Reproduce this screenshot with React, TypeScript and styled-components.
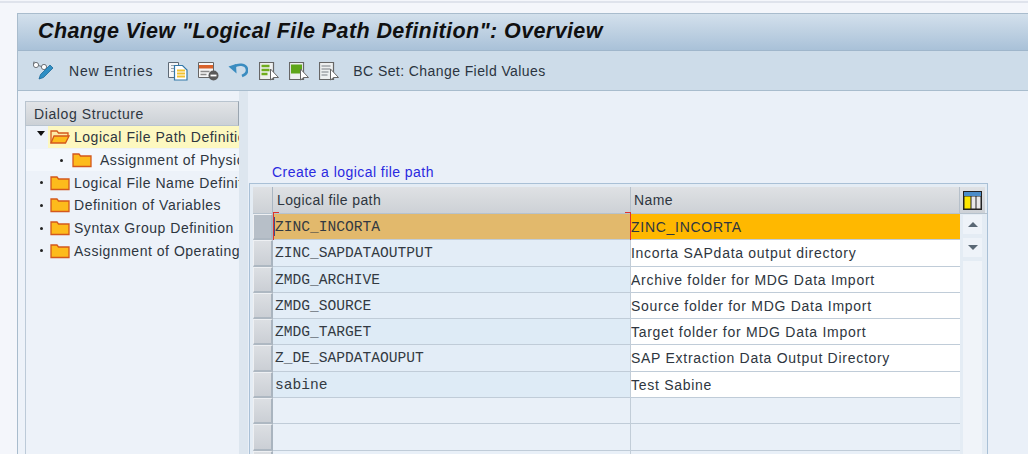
import React from 'react';
import styled, { createGlobalStyle } from 'styled-components';

const GlobalStyle = createGlobalStyle`
    html, body {
        margin: 0;
        padding: 0;
        width: 1028px;
        height: 454px;
        overflow: hidden;
        background: #f4f6fb;
    }
`;

const Page = styled.div`
    width: 1028px;
    height: 454px;
    box-sizing: border-box;
    padding: 1px 0 0 0;
    overflow: hidden;
    font-family: 'Liberation Sans', Arial, sans-serif;
`;

const TopLine = styled.div`
    height: 12px;
    border-top: 2px solid #dfe3ec;
    box-sizing: border-box;
`;

const Frame = styled.div`
    margin-left: 17px;
    height: 441px;
    border-left: 1px solid #a9bccd;
    border-top: 1px solid #a9bccd;
    display: flex;
    flex-direction: column;
`;

const TitleBar = styled.div`
    height: 37px;
    flex: none;
    box-sizing: border-box;
    padding: 2px 0 0 20px;
    background: linear-gradient(#d3e0ec, #a9c1d8);
    border-bottom: 1px solid #9fb6cb;
`;

const Title = styled.h1`
    margin: 0;
    font: italic bold 21.5px/30px 'Liberation Sans', Arial, sans-serif;
    letter-spacing: 0.4px;
    color: #101010;
    white-space: nowrap;
`;

const Toolbar = styled.div`
    height: 40px;
    flex: none;
    box-sizing: border-box;
    display: flex;
    align-items: center;
    padding-left: 14px;
    background: #cddce9;
    border-bottom: 1px solid #a8bccd;
`;

const ToolText = styled.span<{ $gap?: number; $spacing: number }>`
    margin-right: ${(p) => p.$gap ?? 0}px;
    font-size: 14px;
    letter-spacing: ${(p) => p.$spacing}px;
    color: #2b3440;
    white-space: nowrap;
`;

const ToolIcon = styled.svg<{ $gap?: number }>`
    flex: none;
    margin-right: ${(p) => p.$gap ?? 10}px;
`;

const Body = styled.div`
    flex: 1;
    min-height: 0;
    display: flex;
    background: #e8eff7;
`;

const TreePanel = styled.div`
    width: 221px;
    flex: none;
    box-sizing: border-box;
    padding: 10px 0 0 7px;
    background: #edf2f9;
`;

const TreeHeader = styled.div`
    height: 25px;
    box-sizing: border-box;
    padding-left: 8px;
    font-size: 14px;
    letter-spacing: 0.6px;
    line-height: 24px;
    color: #2e3640;
    background: linear-gradient(#e2e4e7, #ccd1d6);
    border: 1px solid #b9c4cf;
    border-right-color: #9aa5b0;
`;

const TreeList = styled.div`
    border-left: 1px solid #bccad8;
    height: 330px;
    overflow: hidden;
`;

const TreeRow = styled.div<{ $indent: number; $soft?: boolean }>`
    height: 22.7px;
    display: flex;
    align-items: center;
    padding-left: ${(p) => p.$indent}px;
    background: ${(p) => (p.$soft ? '#f3f7fc' : 'transparent')};
    white-space: nowrap;
    overflow: hidden;
`;

const Marker = styled.span`
    width: 12px;
    flex: none;
    display: flex;
    justify-content: center;
`;

const Dot = styled.span`
    width: 3px;
    height: 3px;
    border-radius: 50%;
    background: #222;
`;

const Arrow = styled.span`
    margin-top: -6px;
    width: 0;
    height: 0;
    border-left: 4px solid transparent;
    border-right: 4px solid transparent;
    border-top: 5px solid #111;
`;

const NodeLabel = styled.span<{ $gap: number }>`
    margin-left: ${(p) => p.$gap}px;
    font-size: 14px;
    letter-spacing: 0.52px;
    line-height: 22px;
    color: #2e3640;
    flex: 1;
`;

const FolderSlot = styled.span<{ $gap: number }>`
    margin-left: ${(p) => p.$gap}px;
    display: flex;
    flex: none;
`;

const ActiveWrap = styled.span`
    display: flex;
    align-items: center;
    flex: 1;
    height: 22px;
    margin-left: 1px;
    padding-left: 2px;
    background: #fdf8c0;
`;

const Splitter = styled.div`
    width: 9px;
    flex: none;
    background: #dde6ef;
`;

const Content = styled.div`
    flex: 1;
    min-width: 0;
    box-sizing: border-box;
    padding: 70px 0 0 1px;
    background: #eaf0f8;
`;

const Caption = styled.div`
    margin-left: 23px;
    height: 22px;
    font-size: 14px;
    letter-spacing: 0.45px;
    line-height: 23px;
    color: #2a2ae0;
`;

const TableWrap = styled.div`
    width: 739px;
    height: 300px;
    box-sizing: border-box;
    padding: 3px 0 0 3px;
    background: #e4ecf4;
    border: 1px solid #a9c0d6;
    border-bottom: none;
`;

const HeaderRow = styled.div`
    display: flex;
    height: 26px;
    border-bottom: 1px solid #b6c2cd;
`;

const Corner = styled.div`
    width: 20px;
    flex: none;
    background: linear-gradient(#dfe1e4, #cdd1d6);
    border-right: 1px solid #aab6c2;
    box-sizing: border-box;
`;

const HeaderCell = styled.div<{ $w: number; $pad: number }>`
    width: ${(p) => p.$w}px;
    flex: none;
    box-sizing: border-box;
    padding-left: ${(p) => p.$pad}px;
    font-size: 14px;
    letter-spacing: 0.4px;
    line-height: 26px;
    color: #2e3640;
    background: linear-gradient(#dfe1e4, #cdd1d6);
    border-right: 1px solid #b6c0ca;
`;

const ConfigCell = styled.div`
    width: 25px;
    flex: none;
    display: flex;
    justify-content: center;
    align-items: center;
    background: linear-gradient(#dfe1e4, #cdd1d6);
`;

const BodyArea = styled.div`
    display: flex;
`;

const Rows = styled.div`
    width: 707px;
    flex: none;
`;

const Row = styled.div`
    display: flex;
    height: 26.3px;
    box-sizing: border-box;
`;

const Selector = styled.div<{ $selected?: boolean }>`
    width: 20px;
    flex: none;
    box-sizing: border-box;
    border: 1px solid #eef0f3;
    border-right: 2px solid #a9b4bf;
    border-bottom: 2px solid #aeb8c2;
    background: ${(p) => (p.$selected ? '#b7bfc8' : 'linear-gradient(#dcdfe3, #cbcfd5)')};
`;

const KeyCell = styled.div<{ $selected?: boolean; $filled: boolean; $alt: boolean }>`
    width: 358px;
    flex: none;
    box-sizing: border-box;
    position: relative;
    padding: 1px 0 0 2px;
    font: 14.6px/24px 'Liberation Mono', 'Courier New', monospace;
    color: #333a42;
    background: ${(p) =>
        p.$selected ? '#e2b96c' : p.$filled ? (p.$alt ? '#deebf6' : '#e3edf7') : '#e9f0f8'};
    border-right: 1px solid #c2cdd8;
    border-bottom: 1px solid #c0ccd8;
`;

const FocusMark = styled.span<{ $side: 'left' | 'right' }>`
    position: absolute;
    ${(p) => p.$side}: ${(p) => (p.$side === 'left' ? '0' : '-1px')};
    top: -2px;
    width: 6px;
    height: 29px;
    box-sizing: border-box;
    border-top: 1px solid #e0322c;
    border-bottom: 1px solid #e0322c;
    border-${(p) => p.$side}: 1px solid #e0322c;
`;

const Cursor = styled.span`
    position: absolute;
    left: 1px;
    top: 3px;
    width: 1px;
    height: 19px;
    background: #3a4f8c;
`;

const NameCell = styled.div<{ $selected?: boolean; $filled: boolean }>`
    width: 329px;
    flex: none;
    box-sizing: border-box;
    padding: 1px 0 0 0;
    font-size: 14px;
    letter-spacing: 0.72px;
    line-height: 24px;
    white-space: nowrap;
    color: #2e3640;
    background: ${(p) => (p.$selected ? '#ffb800' : p.$filled ? '#ffffff' : '#e9f0f8')};
    border-bottom: 1px solid #c0ccd8;
`;

const Scrollbar = styled.div`
    width: 25px;
    flex: none;
    display: flex;
    flex-direction: column;
    align-items: center;
    padding-top: 1px;
    gap: 4px;
`;

const ScrollButton = styled.div`
    width: 19px;
    height: 19px;
    display: flex;
    align-items: center;
    justify-content: center;
    background: #eef3f9;
`;

const ArrowUp = styled.span`
    width: 0;
    height: 0;
    border-left: 5px solid transparent;
    border-right: 5px solid transparent;
    border-bottom: 5px solid #5a6875;
`;

const ArrowDown = styled.span`
    width: 0;
    height: 0;
    border-left: 5px solid transparent;
    border-right: 5px solid transparent;
    border-top: 5px solid #5a6875;
`;

const ScrollTrack = styled.div`
    width: 19px;
    height: 200px;
    background: #f0f4f9;
`;

const GlassesPenIcon = () => (
    <ToolIcon $gap={13} width="24" height="22" viewBox="0 0 24 22">
        <circle cx="4" cy="5" r="2.600" fill="#fff" stroke="#6c7278" />
        <circle cx="12" cy="7" r="2.600" fill="#fff" stroke="#6c7278" />
        <path d="M6.500 5.500 9.500 6.500M1.500 4 2 1.500" stroke="#6c7278" fill="none" />
        <path d="M7 19l1.500-4.500L18 5l3 3-9.500 9.500z" fill="#2f8fc4" stroke="#1d6a99" strokeWidth="0.8" />
    </ToolIcon>
);

const CopyIcon = () => (
    <ToolIcon width="20" height="20" viewBox="0 0 20 20">
        <path d="M0.500 1.500h10v15h-10z" fill="#f4f6f8" stroke="#5e6a76" />
        <path d="M3 4.500h5M3 7.500h3M3 10.500h3" stroke="#9aa4ae" />
        <path d="M6.500 4.500h8l4.500 4.500v10h-12.500z" fill="#fff" stroke="#3278a8" strokeWidth="1.200" />
        <path d="M9 9.500h8M9 12.500h8M9 15.500h8" stroke="#f2c230" strokeWidth="1.800" />
    </ToolIcon>
);

const DeleteIcon = () => (
    <ToolIcon $gap={9} width="21" height="20" viewBox="0 0 21 20">
        <path d="M0.500 1.500h15v15h-15z" fill="#f6f6f6" stroke="#666" />
        <path d="M1 4h14v3.500H1z" fill="#d9622b" />
        <path d="M2.500 10.500h9M2.500 13.500h6" stroke="#8a8a8a" strokeWidth="1.300" />
        <circle cx="15.500" cy="14.500" r="5" fill="#5a5a5a" />
        <path d="M12.500 14.500h6" stroke="#fff" strokeWidth="1.800" />
    </ToolIcon>
);

const UndoIcon = () => (
    <ToolIcon $gap={11} width="20" height="20" viewBox="0 0 20 20">
        <path
            d="M6 5.500c4-2.500 12-3 13 3c.5 3.500-2.500 5.500-5 6.500"
            fill="none"
            stroke="#3a8cc0"
            strokeWidth="2.600"
        />
        <path d="M0.500 5.500l7.500-2.500 .500 9.500z" fill="#3a8cc0" />
    </ToolIcon>
);

const SelectIcon = ({ kind, gap }: { kind: 'lines' | 'block' | 'plain'; gap?: number }) => (
    <ToolIcon $gap={gap} width="20" height="20" viewBox="0 0 20 20">
        <path d="M0.500 1.500h14v17h-14z" fill="#eef0f0" stroke="#666" strokeWidth="1.200" />
        {kind === 'lines' && <path d="M2.500 5h8M2.500 9h8M2.500 13h6" stroke="#6fac1e" strokeWidth="2.600" />}
        {kind === 'block' && <path d="M2 3.500h11v9H2z" fill="#5ea518" />}
        {kind === 'plain' && <path d="M2.500 5h9M2.500 8h9M2.500 11h7M2.500 14h6" stroke="#a0a4a8" strokeWidth="1.300" />}
        <path d="M11.500 8v11l3-2.500h5z" fill="#fff" stroke="#666" />
    </ToolIcon>
);

const FolderIcon = ({ open }: { open?: boolean }) => (
    <svg width="20" height="16" viewBox="0 0 20 16">
        {open ? (
            <>
                <path d="M1 14V2h6l1.500 2H18v3" fill="#fde9a6" stroke="#d4581c" strokeWidth="1.300" />
                <path d="M1 14 4 7h15l-3.500 7z" fill="#fdbb1c" stroke="#d4581c" strokeWidth="1.300" />
            </>
        ) : (
            <path d="M1 14.500V2h6l1.500 2H19v10.500z" fill="#fdbb1c" stroke="#d4581c" strokeWidth="1.300" />
        )}
    </svg>
);

const ColumnsIcon = () => (
    <svg width="19" height="19" viewBox="0 0 19 19">
        <path d="M0 0h19v19H0z" fill="#222" />
        <path d="M1 1h17v4H1z" fill="#4a8cc8" />
        <path d="M1.500 5.500h6v12h-6z" fill="#fce600" />
        <path d="M8.500 5.500h4v12h-4zM13.500 5.500h4v12h-4z" fill="#e8e8e8" />
    </svg>
);

const treeItems = [
    { label: 'Logical File Path Definition', level: 0, active: true },
    { label: 'Assignment of Physical Paths', level: 1 },
    { label: 'Logical File Name Definition', level: 0 },
    { label: 'Definition of Variables', level: 0 },
    { label: 'Syntax Group Definition', level: 0 },
    { label: 'Assignment of Operating Systems', level: 0 },
];

const rows = [
    { key: 'ZINC_INCORTA', name: 'ZINC_INCORTA' },
    { key: 'ZINC_SAPDATAOUTPUT', name: 'Incorta SAPdata output directory' },
    { key: 'ZMDG_ARCHIVE', name: 'Archive folder for MDG Data Import' },
    { key: 'ZMDG_SOURCE', name: 'Source folder for MDG Data Import' },
    { key: 'ZMDG_TARGET', name: 'Target folder for MDG Data Import' },
    { key: 'Z_DE_SAPDATAOUPUT', name: 'SAP Extraction Data Output Directory' },
    { key: 'sabine', name: 'Test Sabine' },
    { key: '', name: '' },
    { key: '', name: '' },
    { key: '', name: '' },
];

const App = (): React.ReactElement => {
    return (
        <Page>
            <GlobalStyle />
            <TopLine />
            <Frame>
                <TitleBar>
                    <Title>Change View "Logical File Path Definition": Overview</Title>
                </TitleBar>
                <Toolbar>
                    <GlassesPenIcon />
                    <ToolText $gap={15} $spacing={0.8}>New Entries</ToolText>
                    <CopyIcon />
                    <DeleteIcon />
                    <UndoIcon />
                    <SelectIcon kind="lines" />
                    <SelectIcon kind="block" />
                    <SelectIcon kind="plain" gap={14} />
                    <ToolText $spacing={0.42}>BC Set: Change Field Values</ToolText>
                </Toolbar>
                <Body>
                    <TreePanel>
                        <TreeHeader>Dialog Structure</TreeHeader>
                        <TreeList>
                            {treeItems.map((item) => (
                                <TreeRow key={item.label} $indent={item.level ? 29 : 9} $soft={item.level === 1}>
                                    <Marker>{item.active ? <Arrow /> : <Dot />}</Marker>
                                    {item.active ? (
                                        <ActiveWrap>
                                            <FolderIcon open />
                                            <NodeLabel $gap={4}>{item.label}</NodeLabel>
                                        </ActiveWrap>
                                    ) : (
                                        <>
                                            <FolderSlot $gap={item.level ? 5 : 3}>
                                                <FolderIcon />
                                            </FolderSlot>
                                            <NodeLabel $gap={item.level ? 8 : 4}>{item.label}</NodeLabel>
                                        </>
                                    )}
                                </TreeRow>
                            ))}
                        </TreeList>
                    </TreePanel>
                    <Splitter />
                    <Content>
                        <Caption>Create a logical file path</Caption>
                        <TableWrap>
                            <HeaderRow>
                                <Corner />
                                <HeaderCell $w={358} $pad={4}>Logical file path</HeaderCell>
                                <HeaderCell $w={329} $pad={3}>Name</HeaderCell>
                                <ConfigCell>
                                    <ColumnsIcon />
                                </ConfigCell>
                            </HeaderRow>
                            <BodyArea>
                                <Rows>
                                    {rows.map((row, i) => (
                                        <Row key={i}>
                                            <Selector $selected={i === 0} />
                                            <KeyCell $selected={i === 0} $filled={!!row.key} $alt={i % 2 === 0}>
                                                {i === 0 && (
                                                    <>
                                                        <FocusMark $side="left" />
                                                        <Cursor />
                                                        <FocusMark $side="right" />
                                                    </>
                                                )}
                                                {row.key}
                                            </KeyCell>
                                            <NameCell $selected={i === 0} $filled={!!row.name}>
                                                {row.name}
                                            </NameCell>
                                        </Row>
                                    ))}
                                </Rows>
                                <Scrollbar>
                                    <ScrollButton>
                                        <ArrowUp />
                                    </ScrollButton>
                                    <ScrollButton>
                                        <ArrowDown />
                                    </ScrollButton>
                                    <ScrollTrack />
                                </Scrollbar>
                            </BodyArea>
                        </TableWrap>
                    </Content>
                </Body>
            </Frame>
        </Page>
    );
};

export default App;
